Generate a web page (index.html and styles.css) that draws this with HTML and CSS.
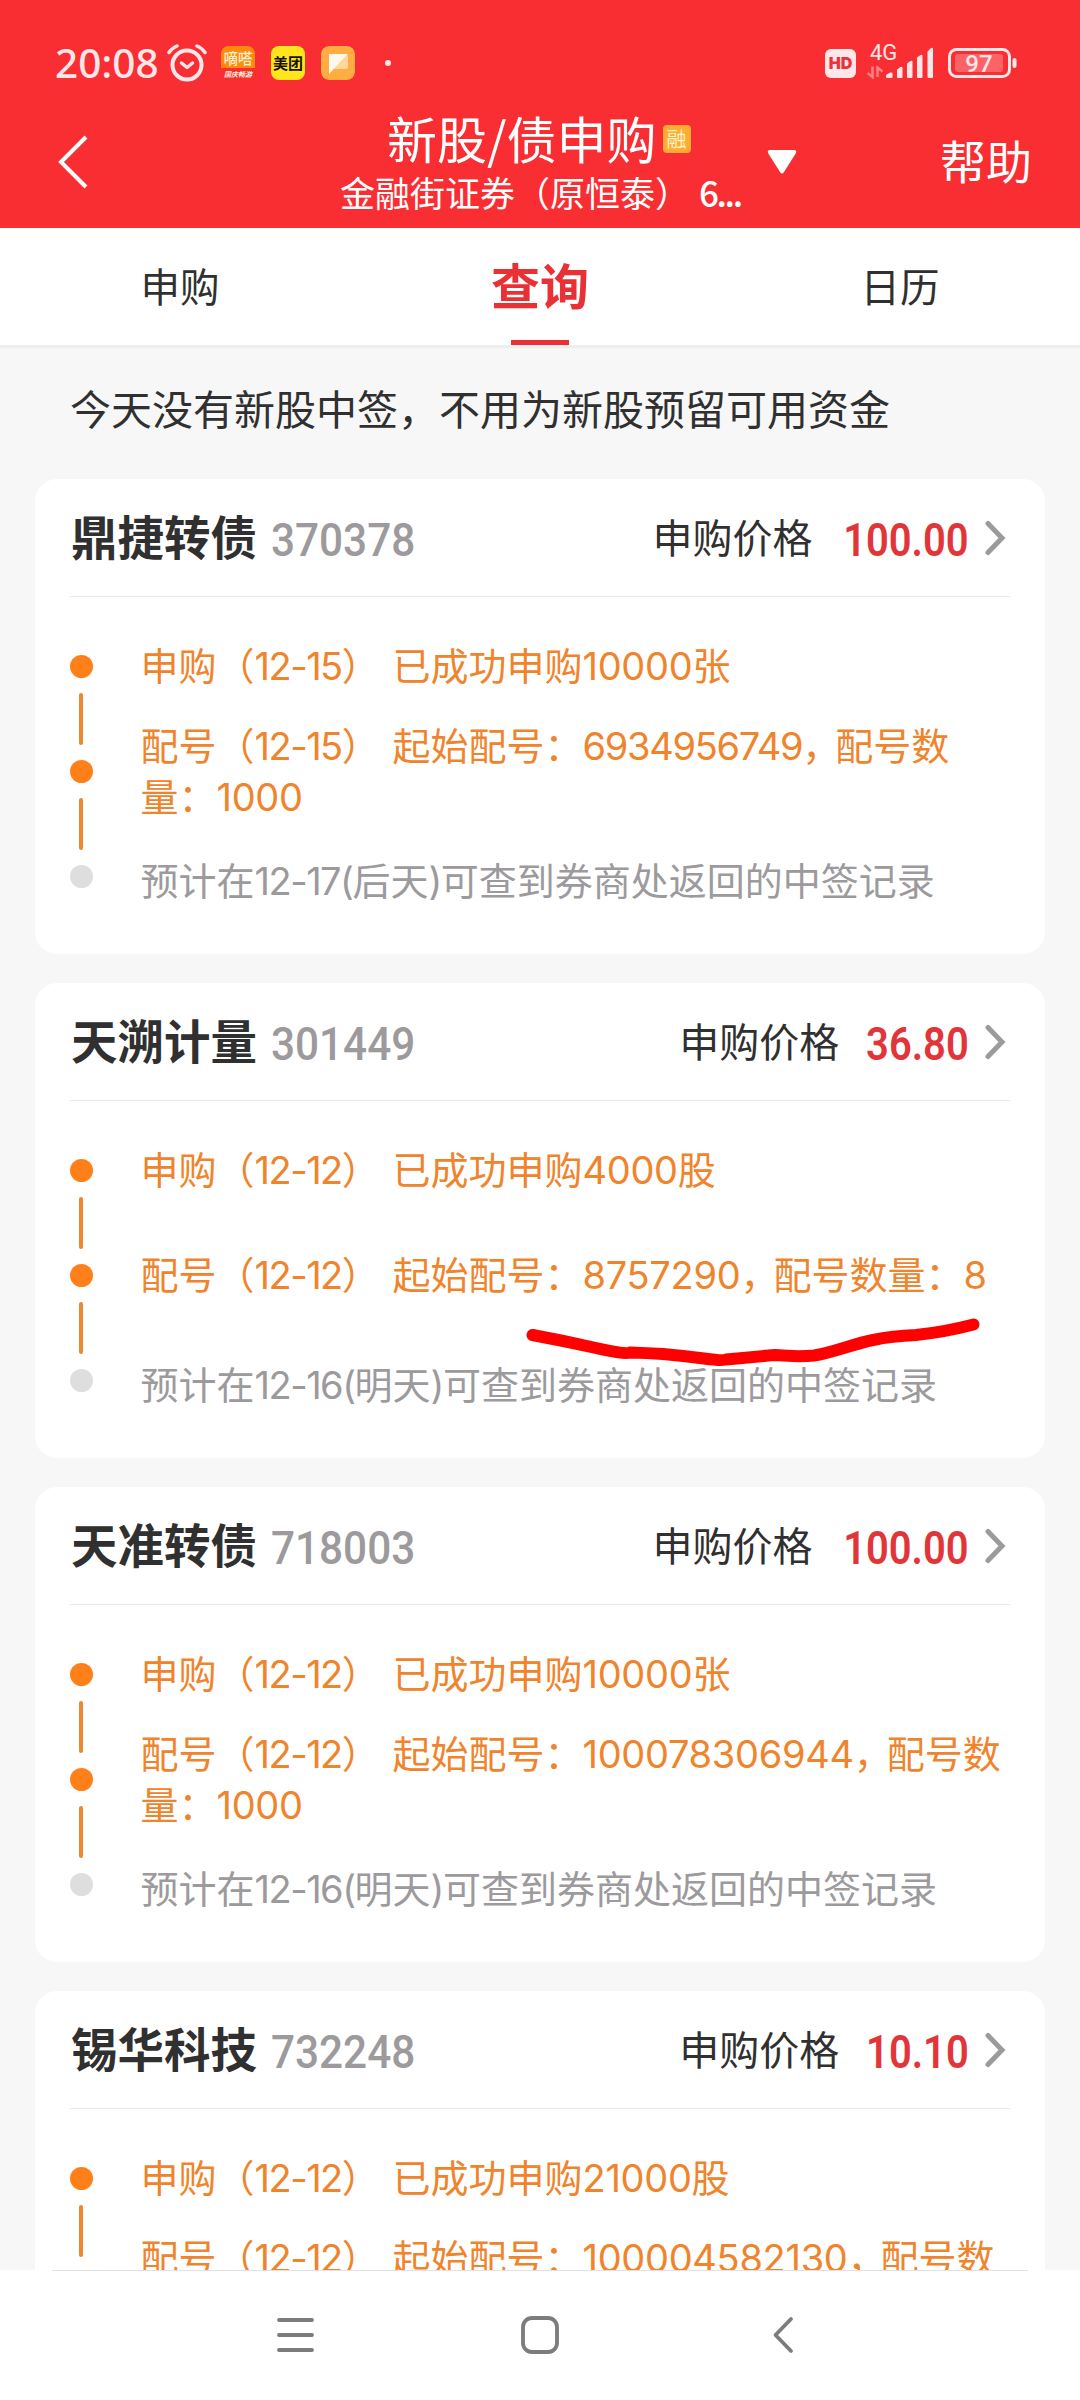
FILE: index.html
```html
<!DOCTYPE html>
<html lang="zh-CN">
<head>
<meta charset="utf-8">
<title>新股/债申购</title>
<link rel="stylesheet" href="styles.css">
</head>
<body>
<div class="app">
  <header class="header">
    <div class="status">
      <span class="clock">20:08</span>
      <svg class="alarm" width="40" height="38" viewBox="0 0 40 38" fill="none" stroke="#ffe6e8" stroke-linecap="round" stroke-linejoin="round"><circle cx="20" cy="21" r="14.500" stroke-width="4"/><path d="M14.500 19l5.500 4.500 5.500-4.500" stroke-width="3.500"/><path d="M2 8.500Q5 4 10 2M38 8.500Q35 4 30 2" stroke-width="3.500"/></svg>
      <span class="appicon dida"><b>嘀嗒</b><i>国庆畅游</i></span>
      <span class="appicon meituan">美团</span>
      <svg class="appicon" width="34" height="34" viewBox="0 0 34 34"><rect width="34" height="34" rx="8" fill="#ffad42"/><path d="M8 8h17q2 0 2 2v11q0 2-2 2H13z" fill="#ffd79a"/><path d="M8 8h18.500L8 28z" fill="#fff8ec"/></svg>
      <span class="dot-more"></span>
      <span class="hd">HD</span>
      <svg class="signal" width="68" height="38" viewBox="0 0 68 38"><g fill="#ffe6e8"><path d="M19 33q0-1.500 1.500-2l3-1.500q2-.5 2 1V34q0 1-1 1H20q-1 0-1-1zM30 26.500l3.500-2.500q2-.8 2 1V34q0 1-1 1h-3.500q-1 0-1-1zM40 20.500l3.500-2.500q2-.8 2 1v15q0 1-1 1h-3.500q-1 0-1-1zM50 14.500l3.500-2.500q2-.8 2 1v21q0 1-1 1h-3.500q-1 0-1-1zM60.500 8.500L64 5q2-1 2 1v28q0 1-1 1h-3.500q-1 0-1-1z"/></g><path d="M5.500 23.500V34L.5 30M10.500 34V24.500l5 4" fill="none" stroke="#ff8085" stroke-width="2.500"/><text x="3" y="16.500" class="net">4G</text></svg>
      <svg class="battery" width="70" height="32" viewBox="0 0 70 32"><rect x="1.500" y="2.500" width="60" height="27" rx="7" fill="none" stroke="#ffe6e8" stroke-width="3"/><rect x="7" y="7" width="48" height="18" rx="2.500" fill="#fb6367"/><rect x="64.500" y="11" width="4" height="10" rx="2" fill="#ffe6e8"/><text x="31" y="24.500" text-anchor="middle" class="pct">97</text></svg>
    </div>
    <div class="titlebar">
      <svg class="back" width="32" height="56" viewBox="0 0 32 56" fill="none" stroke="#fff" stroke-width="4"><path d="M29 3L4 28l25 25"/></svg>
      <div class="heading">
        <div class="title">新股/债申购<span class="badge">融</span></div>
        <div class="subtitle">金融街证券（原恒泰）<span class="account">6...</span></div>
      </div>
      <svg class="caret" width="30" height="25" viewBox="0 0 30 25"><path d="M2 0h26q2 1 1 3L17 22q-2 3-4 0L1 3Q0 1 2 0z" fill="#fff"/></svg>
      <span class="help">帮助</span>
    </div>
  </header>
  <nav class="tabs">
    <span class="tab">申购</span>
    <span class="tab active">查询</span>
    <span class="tab">日历</span>
  </nav>
  <main class="list">
    <p class="notice">今天没有新股中签，不用为新股预留可用资金</p>

    <section class="card">
      <div class="card-head"><h2>鼎捷转债</h2><span class="code">370378</span><span class="label">申购价格</span><span class="price">100.00</span><svg class="chev" width="22" height="36" viewBox="0 0 22 36"><path d="M4 3.500L18 18 4 32.500"/></svg></div>
      <ol class="steps">
        <li class="done"><p><span class="when">申购（<span class="date">12-15</span>）</span>已成功申购<span class="num">10000</span>张</p></li>
        <li class="done"><p><span class="when">配号（<span class="date">12-15</span>）</span>起始配号：<span class="num tight">6934956749</span><span class="comma">，</span>配号数<br>量：<span class="num">1000</span></p></li>
        <li><p>预计在<span class="date">12-17(</span>后天<span class="date">)</span>可查到券商处返回的中签记录</p></li>
      </ol>
    </section>

    <section class="card">
      <div class="card-head"><h2>天溯计量</h2><span class="code">301449</span><span class="label">申购价格</span><span class="price">36.80</span><svg class="chev" width="22" height="36" viewBox="0 0 22 36"><path d="M4 3.500L18 18 4 32.500"/></svg></div>
      <ol class="steps">
        <li class="done"><p><span class="when">申购（<span class="date">12-12</span>）</span>已成功申购<span class="num">4000</span>股</p></li>
        <li class="done"><p><span class="when">配号（<span class="date">12-12</span>）</span>起始配号：<span class="num">8757290</span><span class="comma">，</span>配号数量：<span class="num">8</span></p></li>
        <li><p>预计在<span class="date">12-16(</span>明天<span class="date">)</span>可查到券商处返回的中签记录</p></li>
      </ol>
      <svg class="scribble" width="460" height="60" viewBox="0 0 460 60"><path d="M12.500 20Q45 26 76 33T110 37.500Q128 38 143 39Q165 41 184 43.500T206 44.500Q232 42 255 40Q278 42 294 40.500C312 38 333 29 353 25Q372 21 396 20Q425 17 453.500 9.500"/></svg>
    </section>

    <section class="card">
      <div class="card-head"><h2>天准转债</h2><span class="code">718003</span><span class="label">申购价格</span><span class="price">100.00</span><svg class="chev" width="22" height="36" viewBox="0 0 22 36"><path d="M4 3.500L18 18 4 32.500"/></svg></div>
      <ol class="steps">
        <li class="done"><p><span class="when">申购（<span class="date">12-12</span>）</span>已成功申购<span class="num">10000</span>张</p></li>
        <li class="done"><p><span class="when">配号（<span class="date">12-12</span>）</span>起始配号：<span class="num">100078306944</span><span class="comma">，</span>配号数<br>量：<span class="num">1000</span></p></li>
        <li><p>预计在<span class="date">12-16(</span>明天<span class="date">)</span>可查到券商处返回的中签记录</p></li>
      </ol>
    </section>

    <section class="card">
      <div class="card-head"><h2>锡华科技</h2><span class="code">732248</span><span class="label">申购价格</span><span class="price">10.10</span><svg class="chev" width="22" height="36" viewBox="0 0 22 36"><path d="M4 3.500L18 18 4 32.500"/></svg></div>
      <ol class="steps">
        <li class="done"><p><span class="when">申购（<span class="date">12-12</span>）</span>已成功申购<span class="num">21000</span>股</p></li>
        <li class="done"><p><span class="when">配号（<span class="date">12-12</span>）</span>起始配号：<span class="num">100004582130</span><span class="comma">，</span>配号数<br>量：<span class="num">1000</span></p></li>
      </ol>
    </section>
  </main>
  <footer class="sysnav">
    <svg width="40" height="40" viewBox="0 0 40 40"><path d="M3 5h33M3 20h33M3 35h33"/></svg>
    <svg width="40" height="40" viewBox="0 0 40 40"><rect x="3" y="3" width="34" height="34" rx="9"/></svg>
    <svg width="40" height="40" viewBox="0 0 40 40"><path d="M27 4L11.500 20 27 36"/></svg>
  </footer>
</div>
</body>
</html>
```
FILE: styles.css
```css
* { box-sizing: border-box; margin: 0; padding: 0; }

body {
  width: 1080px;
  height: 2400px;
  overflow: hidden;
  font-family: "Noto Sans CJK SC", sans-serif;
  color: #303030;
}

.app {
  width: 1080px;
  height: 2400px;
  display: flex;
  flex-direction: column;
  background: #f7f7f7;
}

/* header */
.header {
  height: 228px;
  flex: none;
  background: #f92e33;
  color: #fff;
}

.status {
  height: 108px;
  padding: 18px 62px 0 55px;
  display: flex;
  align-items: center;
}

.clock {
  width: 112px;
  font: 500 40.500px/40px "Noto Sans", sans-serif;
  color: #ffe6e8;
  white-space: nowrap;
}

.alarm { margin-right: 14px; flex: none; }

.appicon {
  width: 34px;
  height: 34px;
  margin-right: 16px;
  border-radius: 8px;
  flex: none;
}

.dida {
  display: flex;
  flex-direction: column;
  align-items: center;
  background: linear-gradient(#ff8a0c 0 66%, transparent 66%);
  color: #fff3d6;
  white-space: nowrap;
}
.dida b { font-size: 14.500px; line-height: 24px; font-weight: 500; }
.dida i { font-size: 7px; line-height: 9px; font-weight: 700; }

.meituan {
  background: #ffe61c;
  color: #151205;
  font-size: 15px;
  font-weight: 700;
  line-height: 33px;
  text-align: center;
}

.dot-more {
  width: 6px;
  height: 6px;
  margin-left: 14px;
  border-radius: 3px;
  background: #ffe6e8;
}

.hd {
  width: 31px;
  height: 29px;
  margin-left: auto;
  margin-right: 11px;
  border-radius: 6px;
  background: #ffe6e8;
  color: #e8343a;
  font: 900 16px/29px Inter, sans-serif;
  text-align: center;
}

.signal { flex: none; margin-right: 13px; position: relative; top: -1px; overflow: visible; }
.net { font: 22px Roboto, sans-serif; fill: #ffe6e8; }
.battery { flex: none; }
.pct { font: 500 24px Roboto, sans-serif; fill: #ffe6e8; }

.titlebar {
  height: 120px;
  padding-right: 48px;
  padding-left: 57px;
  display: flex;
  align-items: flex-start;
}

.back { margin-top: 26px; flex: none; }
.heading { width: 420px; margin-left: 241px; }

.title {
  height: 57px;
  padding-left: 57px;
  display: flex;
  align-items: center;
  font-size: 50px;
  line-height: 56px;
  white-space: nowrap;
}

.badge {
  width: 28px;
  height: 28px;
  margin-top: 4px;
  margin-left: 6px;
  border-radius: 4px;
  background: #ffac33;
  color: #fff3c8;
  font-size: 20px;
  line-height: 27px;
  text-align: center;
}

.subtitle {
  margin-top: 6px;
  padding-left: 10px;
  display: flex;
  gap: 9px;
  font-size: 35px;
  line-height: 42px;
  white-space: nowrap;
}
.account { font-weight: 500; letter-spacing: -2.400px; }

.caret { margin-top: 42px; margin-left: 17px; flex: none; }
.help { margin-top: 24px; margin-left: auto; font-size: 46px; line-height: 54px; }

/* tabs */
.tabs {
  height: 120px;
  flex: none;
  display: flex;
  background: #fff;
  border-bottom: 3px solid #eee;
}

.tab {
  flex: 1;
  display: flex;
  flex-direction: column;
  align-items: center;
  font-size: 39.500px;
  line-height: 113px;
}

.tab.active { color: #e93034; font-size: 49px; font-weight: 700; line-height: 111px; }
.tab.active::after {
  content: "";
  width: 58px;
  height: 5px;
  margin-top: 1px;
  background: #e93034;
}

/* list */
.list { height: 1922px; overflow: hidden; flex: none; }

.notice {
  height: 131px;
  padding-left: 70px;
  font-size: 41px;
  line-height: 119px;
  white-space: nowrap;
}

.card {
  position: relative;
  width: 1010px;
  height: 475px;
  margin: 0 auto 29px;
  padding: 0 35px;
  border-radius: 22px;
  background: #fff;
}

.card-head {
  height: 118px;
  display: flex;
  align-items: center;
  border-bottom: 1px solid #eaeaea;
  white-space: nowrap;
}

h2 {
  margin-left: 1px;
  padding-bottom: 5px;
  font-size: 46.500px;
  line-height: 60px;
  font-weight: 700;
}

.code {
  width: 150px;
  margin-left: 14px;
  padding-top: 4px;
  font: 500 47px/56px Roboto, sans-serif;
  color: #9c9a9c;
  transform: scaleX(0.9);
  transform-origin: left;
}

.label {
  margin-left: auto;
  padding-bottom: 4px;
  font-size: 40px;
  line-height: 60px;
}

.price {
  margin-left: 9px;
  padding-top: 4px;
  font: 600 47px/56px Roboto, sans-serif;
  color: #e23539;
  transform: scaleX(0.85);
  transform-origin: right;
}

.chev {
  margin-left: 15px;
  margin-right: 4px;
  fill: none;
  stroke: #9b9b9b;
  stroke-width: 5;
  stroke-linecap: round;
}

/* progress steps */
.steps { padding-top: 17px; list-style: none; }

.steps li {
  height: 105px;
  display: flex;
  align-items: center;
  color: #9c9a9c;
}

.steps li::before {
  content: "";
  width: 23px;
  height: 23px;
  border-radius: 50%;
  background: #dedede;
  flex: none;
}

.steps li.done { position: relative; color: #f0842c; }
.steps li.done::before { background: #ff7f19; }
.steps li.done::after {
  content: "";
  position: absolute;
  left: 9px;
  top: 79px;
  width: 4px;
  height: 52px;
  border-radius: 2px;
  background: #eb8833;
}

.steps p {
  margin-left: 47.500px;
  font-family: Inter, "Noto Sans CJK SC", sans-serif;
  font-size: 38px;
  line-height: 51px;
  white-space: nowrap;
}
.steps li:not(.done) p { margin-top: 9px; }

.when { display: inline-block; width: 252px; }
.date { letter-spacing: -1.500px; }
.num { letter-spacing: -0.300px; }
.num.tight { letter-spacing: -1.300px; }
.comma { letter-spacing: -5px; }

.scribble {
  position: absolute;
  left: 485px;
  top: 332px;
  fill: none;
  stroke: #f00;
  stroke-width: 12;
  stroke-linecap: round;
  stroke-linejoin: round;
}

/* system navigation */
.sysnav {
  flex: 1;
  padding: 0 276px;
  display: flex;
  justify-content: space-between;
  align-items: center;
  background: linear-gradient(#e2e2e2, #e2e2e2) center top / 976px 1px no-repeat #fff;
}

.sysnav svg {
  fill: none;
  stroke: #7c7b7d;
  stroke-width: 3.800;
  stroke-linecap: round;
  stroke-linejoin: round;
}
```
